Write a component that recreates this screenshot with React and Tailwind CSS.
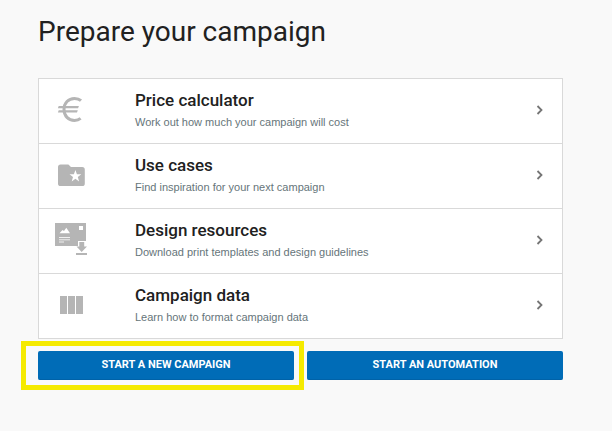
import React from "react";

function EuroIcon() {
  return (
    <svg className="ml-4 h-8 w-8" viewBox="0 0 32 32" fill="none" stroke="#b5b5b5" aria-hidden="true">
      <path d="M26 6.700C24.400 5.200 22.200 4.500 19.500 4.500 13.400 4.500 9 9 9 15.500S13.400 26.400 19.500 26.400c2.500 0 4.500-.7 6.100-2" strokeWidth="3" />
      <path d="M3.700 12H23.900l-.8 2.200H2.900zM3.700 16.200H22.800l-.8 2.200H2.900z" fill="#b5b5b5" stroke="none" />
    </svg>
  );
}

function FolderIcon() {
  return (
    <svg className="ml-[18px] h-8 w-8" viewBox="0 0 32 32" fill="#b5b5b5" aria-hidden="true">
      <path
        fillRule="evenodd"
        d="M3.600 5.500h7.800l2.600 2.600h11.200a2.600 2.600 0 0 1 2.600 2.600v13.700a2.600 2.600 0 0 1-2.600 2.600H3.600A2.600 2.600 0 0 1 1 24.400V8.100a2.600 2.600 0 0 1 2.600-2.600zM18.400 10.900l-1.500 4.300-4.400.1 3.500 2.700-1.300 4.400 3.700-2.600 3.700 2.600-1.300-4.400 3.500-2.700-4.400-.1z"
      />
    </svg>
  );
}

function DesignIcon() {
  return (
    <svg className="ml-4 h-8 w-8 overflow-visible" viewBox="0 0 32 32" fill="#b5b5b5" aria-hidden="true">
      <path d="M0-1h31v23H0z" />
      <path d="M24 2h4v4h-4zM4.500 9.300h10.500L11.300 3.800 9 7 7.500 6z" fill="#fff" />
      <path d="M4 13.500h11M4 15.800h11M4 18h5" stroke="#fff" strokeWidth="1" opacity=".8" />
      <path d="M23 22v-5h8v5z" fill="#fff" />
      <path d="M24.300 18h4.900v4.500H32L26.700 28 21.500 22.500h2.800z" />
      <path d="M21 29h11v2H21z" />
    </svg>
  );
}

function ColumnsIcon() {
  return (
    <svg className="ml-[21px] h-[18px] w-[23px]" viewBox="0 0 23 18" fill="#b5b5b5" aria-hidden="true">
      <path d="M0 0h7v18H0zM8 0h7v18H8zM16 0h7v18h-7z" />
    </svg>
  );
}

function Chevron() {
  return (
    <svg className="mr-[18px] h-2.5 w-2" viewBox="0 0 8 10" fill="none" stroke="#757575" strokeWidth="1.800" aria-hidden="true">
      <path d="M1.500 1l4 4-4 4" />
    </svg>
  );
}

const items = [
  { title: "Price calculator", text: "Work out how much your campaign will cost", Icon: EuroIcon },
  { title: "Use cases", text: "Find inspiration for your next campaign", Icon: FolderIcon },
  { title: "Design resources", text: "Download print templates and design guidelines", Icon: DesignIcon },
  { title: "Campaign data", text: "Learn how to format campaign data", Icon: ColumnsIcon },
];

const buttonStyle =
  "block h-[29px] w-full rounded-xs border-b border-[#0062a8] bg-[#006cb7] font-[Roboto,sans-serif] text-[11px] font-bold text-white uppercase";

export default function App() {
  return (
    <main className="min-h-screen bg-[#f9f9f9] pt-3 pr-[49px] pb-10 pl-[38px] font-['Liberation_Sans',Arial,sans-serif]">
      <h1 className="font-[Roboto,sans-serif] text-[28px] leading-10 text-[#212121]">Prepare your campaign</h1>
      <ul className="mt-[26px] divide-y divide-[#d9d9d9] border border-[#d9d9d9] bg-white">
        {items.map(({ title, text, Icon }) => (
          <li key={title}>
            <a href="#" className="flex h-16 items-center pb-0.5">
              <span className="flex w-24 shrink-0">
                <Icon />
              </span>
              <span className="flex-1">
                <span className="block font-[Roboto,sans-serif] text-[17px] leading-6 font-medium text-[#212121]">{title}</span>
                <span className="block text-[11px] leading-5 text-[#66757a]">{text}</span>
              </span>
              <Chevron />
            </a>
          </li>
        ))}
      </ul>
      <div className="mt-3 grid grid-cols-2 gap-[13px]">
        <div className="relative">
          <button type="button" className={buttonStyle}>Start a new campaign</button>
          <span className="pointer-events-none absolute -top-2.5 -right-2.5 -bottom-2.5 -left-[17px] border-[5px] border-[#f5ea00]" />
        </div>
        <button type="button" className={buttonStyle}>Start an automation</button>
      </div>
    </main>
  );
}
